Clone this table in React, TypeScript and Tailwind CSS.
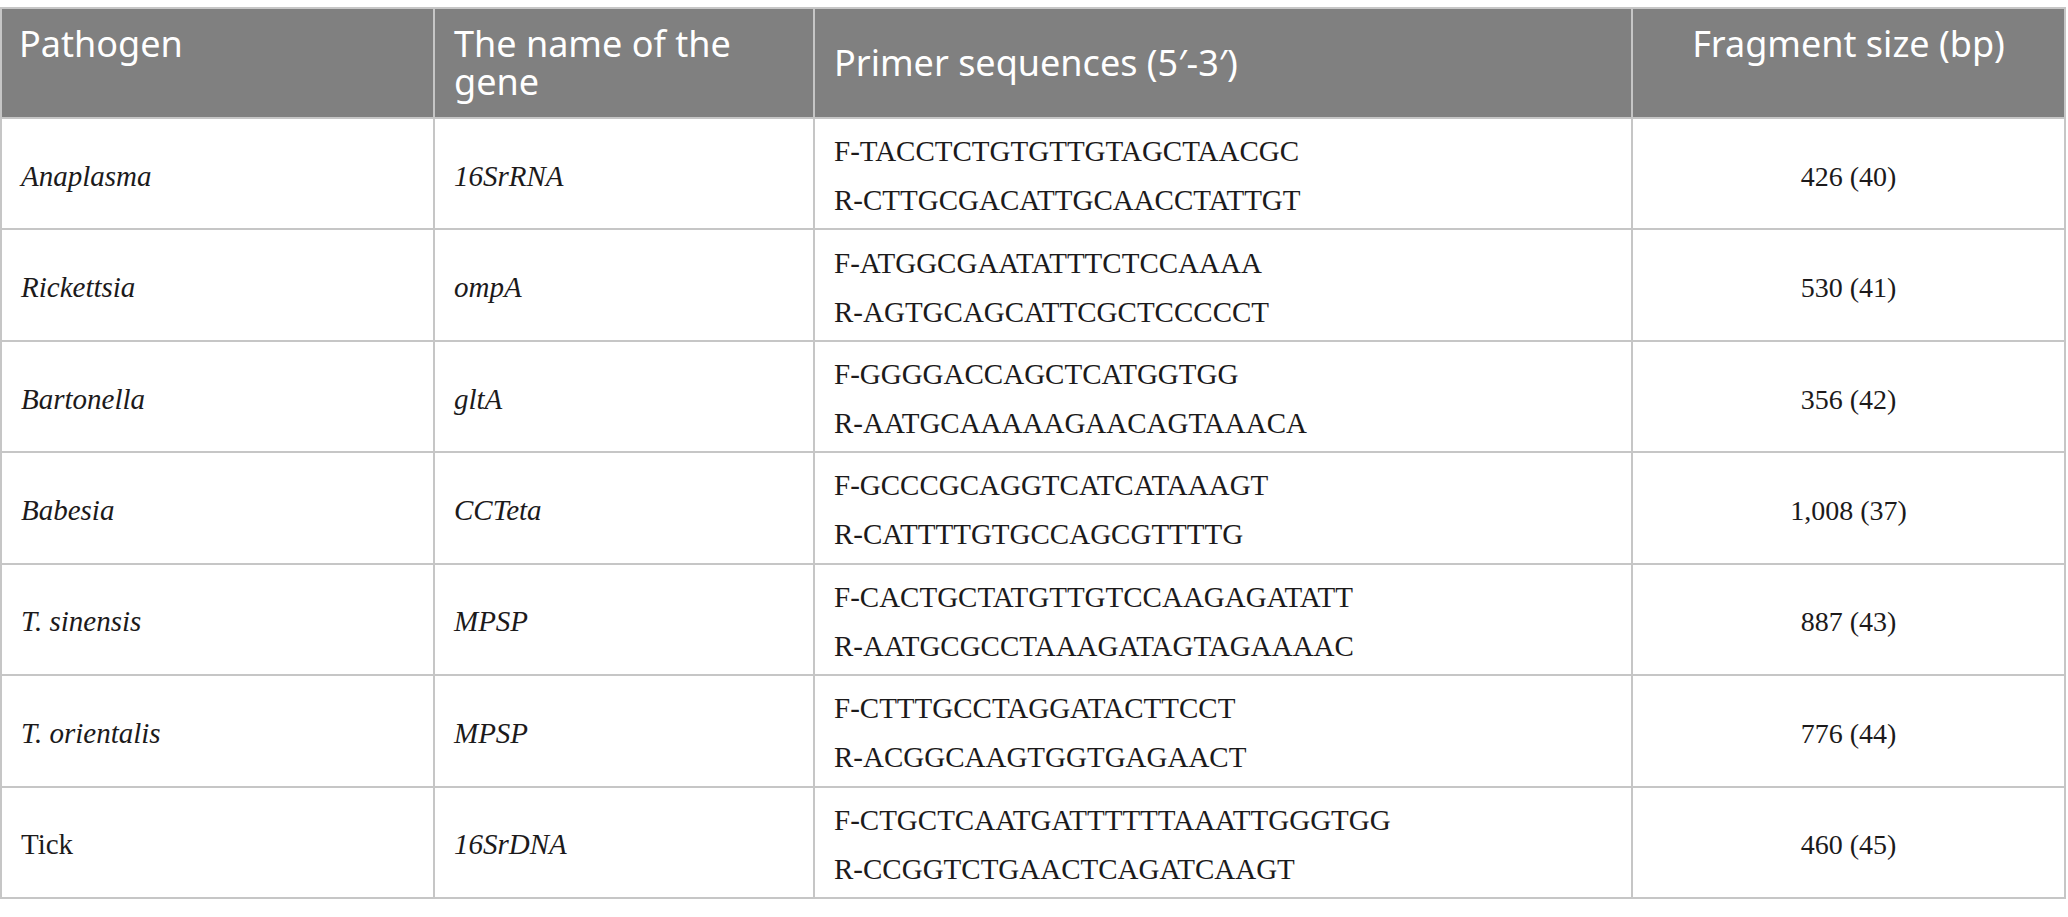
import React from 'react';

type PrimerRow = {
  pathogen: string;
  italicPathogen: boolean;
  gene: string;
  forward: string;
  reverse: string;
  size: string;
};

const rows: PrimerRow[] = [
  { pathogen: 'Anaplasma', italicPathogen: true, gene: '16SrRNA', forward: 'F-TACCTCTGTGTTGTAGCTAACGC', reverse: 'R-CTTGCGACATTGCAACCTATTGT', size: '426 (40)' },
  { pathogen: 'Rickettsia', italicPathogen: true, gene: 'ompA', forward: 'F-ATGGCGAATATTTCTCCAAAA', reverse: 'R-AGTGCAGCATTCGCTCCCCCT', size: '530 (41)' },
  { pathogen: 'Bartonella', italicPathogen: true, gene: 'gltA', forward: 'F-GGGGACCAGCTCATGGTGG', reverse: 'R-AATGCAAAAAGAACAGTAAACA', size: '356 (42)' },
  { pathogen: 'Babesia', italicPathogen: true, gene: 'CCTeta', forward: 'F-GCCCGCAGGTCATCATAAAGT', reverse: 'R-CATTTTGTGCCAGCGTTTTG', size: '1,008 (37)' },
  { pathogen: 'T. sinensis', italicPathogen: true, gene: 'MPSP', forward: 'F-CACTGCTATGTTGTCCAAGAGATATT', reverse: 'R-AATGCGCCTAAAGATAGTAGAAAAC', size: '887 (43)' },
  { pathogen: 'T. orientalis', italicPathogen: true, gene: 'MPSP', forward: 'F-CTTTGCCTAGGATACTTCCT', reverse: 'R-ACGGCAAGTGGTGAGAACT', size: '776 (44)' },
  { pathogen: 'Tick', italicPathogen: false, gene: '16SrDNA', forward: 'F-CTGCTCAATGATTTTTTAAATTGGGTGG', reverse: 'R-CCGGTCTGAACTCAGATCAAGT', size: '460 (45)' },
];

const cols = 'grid grid-cols-[433px_380px_818px_433px]';
const cell = 'box-border border-r-2 border-[#c6c6c6]';

export default function App() {
  return (
    <div className="min-h-screen bg-white">
      <div className="pt-[7px]">
        {/* table */}
        <div className="w-[2066px] border-l-2 border-t-2 border-[#c6c6c6]">
          {/* header */}
          <div
            className={`${cols} h-[110px] box-border border-b-2 border-[#c6c6c6] bg-[#808080] text-white text-[36px] leading-[38px]`}
            style={{ fontFamily: "'Noto Sans', 'Open Sans', sans-serif" }}
          >
            <div className={`${cell} pl-[17px] pt-[16px]`}>Pathogen</div>
            <div className={`${cell} pl-[19px] pr-[20px] pt-[16px]`}>The name of the gene</div>
            <div className={`${cell} pl-[19px] pt-[35px]`}>Primer sequences (5′-3′)</div>
            <div className={`${cell} pt-[16px] text-center`}>Fragment size (bp)</div>
          </div>

          {/* body */}
          {rows.map((r) => (
            <div
              key={r.pathogen}
              className={`${cols} h-[111.43px] box-border border-b-2 border-[#c6c6c6] text-[29px] leading-[49px] text-[#1c1a1b]`}
              style={{ fontFamily: "'Liberation Serif', 'Times New Roman', serif" }}
            >
              <div className={`${cell} flex items-center pl-[19px] pt-[5px] ${r.italicPathogen ? 'italic' : ''}`}>{r.pathogen}</div>
              <div className={`${cell} flex items-center pl-[19px] pt-[5px] italic`}>{r.gene}</div>
              <div className={`${cell} flex flex-col justify-center pl-[19px] pt-[5px]`}>
                <span>{r.forward}</span>
                <span>{r.reverse}</span>
              </div>
              <div className={`${cell} flex items-center justify-center pt-[5px] text-[28px]`}>{r.size}</div>
            </div>
          ))}
        </div>
      </div>
    </div>
  );
}
